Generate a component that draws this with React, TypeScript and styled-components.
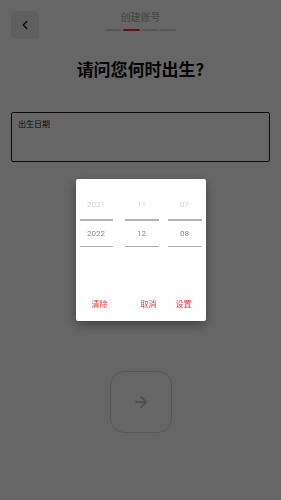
import React from "react";
import styled, { createGlobalStyle } from "styled-components";
import { ArrowRight, ChevronLeft } from "lucide-react";

const Global = createGlobalStyle`
  html, body { margin: 0; padding: 0; }
  body { font-family: Roboto, "Noto Sans CJK SC", sans-serif; background: #fff; }
`;

const Page = styled.div`
  position: relative;
  width: 281px;
  height: 500px;
  background: #fff;
  overflow: hidden;
  display: flex;
  flex-direction: column;
`;

const Header = styled.div`
  position: relative;
  height: 50px;
  display: flex;
  align-items: flex-start;
  justify-content: center;
`;

const BackButton = styled.button`
  position: absolute;
  left: 11px;
  top: 11px;
  width: 28px;
  height: 28px;
  border: none;
  border-radius: 5px;
  background: #eeeeee;
  display: flex;
  align-items: center;
  justify-content: center;
  padding: 0;
  color: #111;
`;

const TitleBlock = styled.div`
  display: flex;
  flex-direction: column;
  align-items: center;
  padding-top: 10px;
`;

const Title = styled.div`
  font-family: "Noto Sans CJK SC", sans-serif;
  font-size: 10px;
  line-height: 14px;
  color: #aaaaaa;
`;

const Progress = styled.div`
  display: flex;
  gap: 1px;
  margin-top: 5px;
`;

const Segment = styled.div<{ $active?: boolean }>`
  width: 17px;
  height: 2px;
  border-radius: 1px;
  background: ${(p) => (p.$active ? "#e53935" : "#dddddd")};
`;

const Heading = styled.h1`
  margin: 8px 0 0;
  text-align: center;
  font-family: "Noto Sans CJK SC", sans-serif;
  font-weight: 700;
  font-size: 17px;
  line-height: 22px;
  color: #111;
`;

const InputBox = styled.div`
  margin: 32px 11px 0;
  height: 50px;
  box-sizing: border-box;
  border: 1.5px solid #222;
  border-radius: 2px;
  padding: 5px 6px;
`;

const InputLabel = styled.div`
  font-family: "Noto Sans CJK SC", sans-serif;
  font-size: 8px;
  line-height: 12px;
  color: #222;
`;

const NextWrap = styled.div`
  display: flex;
  justify-content: center;
  margin-top: 209px;
`;

const NextButton = styled.button`
  width: 62px;
  height: 62px;
  border-radius: 14px;
  border: 1.5px solid #dddddd;
  background: #fff;
  display: flex;
  align-items: center;
  justify-content: center;
  color: #bbbbbb;
  padding: 0;
`;

const Overlay = styled.div`
  position: fixed;
  inset: 0;
  background: rgba(0, 0, 0, 0.6);
  display: flex;
  align-items: center;
  justify-content: center;
`;

const Dialog = styled.div`
  width: 130px;
  height: 142px;
  background: #fff;
  border-radius: 2px;
  box-shadow: 0 4px 12px rgba(0, 0, 0, 0.35);
  display: flex;
  flex-direction: column;
  box-sizing: border-box;
`;

const Columns = styled.div`
  display: flex;
  padding: 10px 4px 0;
`;

const Column = styled.div<{ $w: number; $ml: number }>`
  width: ${(p) => p.$w}px;
  margin-left: ${(p) => p.$ml}px;
  display: flex;
  flex-direction: column;
`;

const Cell = styled.div<{ $selected?: boolean; $h: number }>`
  height: ${(p) => p.$h}px;
  display: flex;
  align-items: center;
  justify-content: center;
  font-family: Roboto, sans-serif;
  font-size: 8px;
  color: ${(p) => (p.$selected ? "#888888" : "#d6d6d6")};
`;

const Divider = styled.div`
  height: 1.5px;
  background: #b0b0b0;
`;

const Actions = styled.div`
  margin-top: auto;
  display: flex;
  align-items: center;
  padding: 0 14px 11px 16px;
  height: 14px;
`;

const ActionText = styled.span<{ $ml?: number }>`
  font-family: "Noto Sans CJK SC", sans-serif;
  font-size: 8px;
  color: #e53935;
  margin-left: ${(p) => p.$ml ?? 0}px;
`;

const Spacer = styled.div`
  flex: 1;
`;

const columns = [
  { w: 33, ml: 0, values: ["2021", "2022"] },
  { w: 34, ml: 12, values: ["11", "12"] },
  { w: 34, ml: 9, values: ["07", "08"] },
];

export default function App() {
  return (
    <>
      <Global />
      <Page>
        <Header>
          <BackButton>
            <ChevronLeft size={14} strokeWidth={2.2} />
          </BackButton>
          <TitleBlock>
            <Title>创建账号</Title>
            <Progress>
              <Segment />
              <Segment $active />
              <Segment />
              <Segment />
            </Progress>
          </TitleBlock>
        </Header>
        <Heading>请问您何时出生?</Heading>
        <InputBox>
          <InputLabel>出生日期</InputLabel>
        </InputBox>
        <NextWrap>
          <NextButton>
            <ArrowRight size={18} strokeWidth={1.8} />
          </NextButton>
        </NextWrap>
        <Overlay>
          <Dialog>
            <Columns>
              {columns.map((c, i) => (
                <Column key={i} $w={c.w} $ml={c.ml}>
                  <Cell $h={30}>{c.values[0]}</Cell>
                  <Divider />
                  <Cell $h={25} $selected>
                    {c.values[1]}
                  </Cell>
                  <Divider />
                </Column>
              ))}
            </Columns>
            <Actions>
              <ActionText>清除</ActionText>
              <Spacer />
              <ActionText>取消</ActionText>
              <ActionText $ml={19}>设置</ActionText>
            </Actions>
          </Dialog>
        </Overlay>
      </Page>
    </>
  );
}
